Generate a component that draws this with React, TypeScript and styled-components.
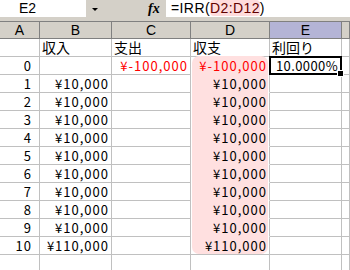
import { createGlobalStyle } from "styled-components";
import styled from "styled-components";

const GlobalStyle = createGlobalStyle`
    html, body {
        margin: 0;
        padding: 0;
        background: #ffffff;
    }
    body {
        font-family: "Noto Sans CJK JP", "Liberation Sans", sans-serif;
        font-size: 13px;
        color: #000000;
    }
`;

type Band = "top" | "mid" | "bottom";

type Row = {
    a: string;
    b: string;
    c: string;
    d: string;
    e: string;
};

const rows: Row[] = [
    { a: "", b: "収入", c: "支出", d: "収支", e: "利回り" },
    { a: "0", b: "", c: "¥-100,000", d: "¥-100,000", e: "10.0000%" },
    ...Array.from({ length: 9 }, (_, i) => ({
        a: String(i + 1),
        b: "¥10,000",
        c: "",
        d: "¥10,000",
        e: "",
    })),
    { a: "10", b: "¥110,000", c: "", d: "¥110,000", e: "" },
    { a: "", b: "", c: "", d: "", e: "" },
];

const columns = ["A", "B", "C", "D", "E", ""];

// D2:D12 is the range referenced by the formula
const bandFor = (i: number): Band | undefined => {
    if (i === 1) return "top";
    if (i === 11) return "bottom";
    if (i > 1 && i < 11) return "mid";
    return undefined;
};

const App = () => {
    return (
        <>
            <GlobalStyle />
            <Sheet>
                <FormulaBar>
                    <NameBox>E2</NameBox>
                    <DropArrow />
                    <FxLabel>fx</FxLabel>
                    <FormulaInput>
                        =IRR(
                        <RangeRef>D2:D12</RangeRef>)
                    </FormulaInput>
                </FormulaBar>
                <Grid>
                    {columns.map((c) => (
                        <HeaderCell key={c || "F"} $selected={c === "E"}>
                            {c}
                        </HeaderCell>
                    ))}
                    {rows.map((r, i) => {
                        const isLabel = i === 0;
                        const negative = i === 1;
                        const align = isLabel ? "left" : "right";
                        return [
                            <Cell key={`a${i}`} $align="right" $inset={7}>
                                {r.a}
                            </Cell>,
                            <Cell key={`b${i}`} $align={align} $label={isLabel}>
                                {r.b}
                            </Cell>,
                            <Cell key={`c${i}`} $align={align} $label={isLabel} $red={negative}>
                                {r.c}
                            </Cell>,
                            <Cell
                                key={`d${i}`}
                                $align={align}
                                $label={isLabel}
                                $red={negative}
                                $band={bandFor(i)}
                            >
                                {r.d}
                            </Cell>,
                            i === 1 ? (
                                <ActiveCell key={`e${i}`}>
                                    {r.e}
                                    <FillHandle />
                                </ActiveCell>
                            ) : (
                                <Cell key={`e${i}`} $align="left" $label={isLabel}>
                                    {r.e}
                                </Cell>
                            ),
                            <Cell key={`f${i}`} $align="left" />,
                        ];
                    })}
                </Grid>
            </Sheet>
        </>
    );
};

const Sheet = styled.div`
    width: 350px;
    height: 270px;
    overflow: hidden;
    background: #d4d0c8;
`;

const FormulaBar = styled.div`
    display: flex;
    align-items: stretch;
    height: 17px;
    padding-bottom: 4px;
`;

const NameBox = styled.div`
    box-sizing: border-box;
    width: 86px;
    padding-left: 19px;
    background: #ffffff;
    font-family: "Liberation Sans", sans-serif;
    font-size: 14px;
    line-height: 17px;
`;

const DropArrow = styled.div`
    width: 0;
    height: 0;
    margin: 8px 0 0 6px;
    border-left: 3px solid transparent;
    border-right: 3px solid transparent;
    border-top: 3px solid #000000;
`;

const FxLabel = styled.div`
    margin-left: 50px;
    width: 18px;
    font-family: "Liberation Serif", serif;
    font-style: italic;
    font-weight: bold;
    font-size: 14px;
    line-height: 17px;
`;

const FormulaInput = styled.div`
    flex: 1;
    background: #ffffff;
    padding-left: 5px;
    font-family: "Liberation Sans", "Noto Sans CJK JP", sans-serif;
    font-size: 14px;
    line-height: 17px;
    letter-spacing: 0.4px;
    white-space: nowrap;
`;

const RangeRef = styled.span`
    background: #ffdcdc;
    border-radius: 4px;
    color: #600000;
`;

const Grid = styled.div`
    display: grid;
    grid-template-columns: 40px 72px 79px 79px 72px 1fr;
    grid-auto-rows: 18px;
    background: #ffffff;
`;

const HeaderCell = styled.div<{ $selected?: boolean }>`
    box-sizing: border-box;
    background: ${(p) => (p.$selected ? "#b4b4d6" : "#d4d0c8")};
    border-top: 1px solid #808080;
    border-right: 1px solid #808080;
    border-bottom: 1px solid #808080;
    display: flex;
    align-items: center;
    justify-content: center;
    font-family: "Liberation Sans", sans-serif;
    font-size: 14px;
`;

const Cell = styled.div<{
    $align: "left" | "right";
    $label?: boolean;
    $red?: boolean;
    $band?: Band;
    $inset?: number;
}>`
    box-sizing: border-box;
    position: relative;
    z-index: 0;
    border-right: 1px solid #c0c0c0;
    border-bottom: 1px solid ${(p) => (p.$band && p.$band !== "bottom" ? "transparent" : "#c0c0c0")};
    display: flex;
    align-items: flex-end;
    justify-content: ${(p) => (p.$align === "right" ? "flex-end" : "flex-start")};
    padding: 0 ${(p) => p.$inset ?? 2}px 0 2px;
    font-size: ${(p) => (p.$label ? "14px" : "13px")};
    letter-spacing: ${(p) => (p.$label ? "0" : "1px")};
    line-height: 17px;
    white-space: nowrap;
    color: ${(p) => (p.$red ? "#ff0000" : "#000000")};

    &::before {
        content: "";
        display: ${(p) => (p.$band ? "block" : "none")};
        position: absolute;
        z-index: -1;
        left: 1px;
        right: 1px;
        top: ${(p) => (p.$band === "top" ? "-1px" : "0")};
        bottom: ${(p) => (p.$band === "bottom" ? "0" : "-1px")};
        background: #ffe0e0;
        border-radius: ${(p) =>
            p.$band === "top" ? "7px 7px 0 0" : p.$band === "bottom" ? "0 0 7px 7px" : "0"};
    }
`;

const ActiveCell = styled.div`
    box-sizing: border-box;
    position: relative;
    z-index: 1;
    margin: -1px 0 0 -1px;
    border: 2px solid #000000;
    display: flex;
    align-items: center;
    justify-content: flex-end;
    padding-right: 2px;
    letter-spacing: 0.4px;
    line-height: 17px;
    white-space: nowrap;
`;

const FillHandle = styled.span`
    position: absolute;
    right: -4px;
    bottom: -4px;
    width: 5px;
    height: 5px;
    background: #000000;
    border: 1px solid #ffffff;
`;

export default App;
